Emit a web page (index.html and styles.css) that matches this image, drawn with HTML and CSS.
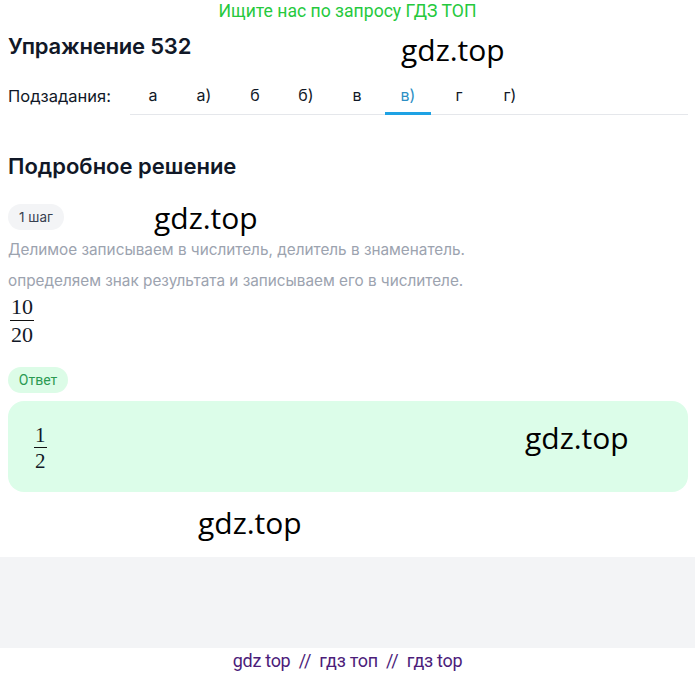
FILE: index.html
```html
<!DOCTYPE html>
<html lang="ru">

<head>
    <meta charset="UTF-8" />
    <meta name="viewport" content="width=device-width, initial-scale=1.0" />
    <title>Упражнение 532</title>
    <link rel="stylesheet" href="styles.css">
</head>

<body>
    <div class="promo">Ищите нас по запросу ГДЗ ТОП</div>
    <main class="task">
        <div class="title-row">
            <h1>Упражнение 532</h1>
            <span class="mark mark-title">gdz.top</span>
        </div>
        <div class="subtasks">
            <span class="subtasks-label">Подзадания:</span>
            <nav class="tabs">
                <a href="#">а</a>
                <a href="#">а)</a>
                <a href="#">б</a>
                <a href="#">б)</a>
                <a href="#">в</a>
                <a href="#" class="active">в)</a>
                <a href="#">г</a>
                <a href="#">г)</a>
            </nav>
        </div>

        <h2>Подробное решение</h2>
        <div class="step-row">
            <span class="pill">1 шаг</span>
            <span class="mark mark-step">gdz.top</span>
        </div>
        <p class="note">Делимое записываем в числитель, делитель в знаменатель.</p>
        <p class="note">определяем знак результата и записываем его в числителе.</p>
        <div class="frac">
            <span class="num">10</span>
            <span class="den">20</span>
        </div>

        <span class="pill pill-answer">Ответ</span>
        <div class="answer">
            <div class="frac frac-small">
                <span class="num">1</span>
                <span class="den">2</span>
            </div>
            <span class="mark mark-answer">gdz.top</span>
        </div>
        <div class="mark-row">
            <span class="mark">gdz.top</span>
        </div>
    </main>
    <div class="grey-band"></div>
    <footer>gdz top&nbsp; //&nbsp; гдз топ&nbsp; //&nbsp; гдз top</footer>
</body>

</html>
```

FILE: styles.css
```css
* {
    padding: 0;
    margin: 0;
    box-sizing: border-box;
}

body {
    font-family: Inter, "Noto Sans", sans-serif;
    background-color: #fff;
    color: #111827;
}

.promo {
    font-family: Roboto, sans-serif;
    font-size: 17.6px;
    line-height: 22px;
    text-align: center;
    color: #25c93d;
}

.task {
    padding: 0 7px 0 8px;
}

.title-row {
    position: relative;
    padding-top: 11px;
}

h1 {
    font-size: 22px;
    line-height: 26px;
    font-weight: 600;
    letter-spacing: -0.2px;
}

.mark {
    font-family: "Open Sans", sans-serif;
    font-size: 30px;
    line-height: 34px;
    color: #000;
}

.mark-title {
    position: absolute;
    left: 393px;
    top: 11px;
}

.subtasks {
    display: flex;
    align-items: flex-end;
    margin-top: 19px;
}

.subtasks-label {
    width: 122px;
    font-size: 16.5px;
    line-height: 20px;
    padding-bottom: 9px;
}

.tabs {
    display: flex;
    gap: 5px;
    flex: 1;
    border-bottom: 1px solid #e5e7eb;
}

.tabs a {
    width: 46px;
    height: 36px;
    line-height: 34px;
    text-align: center;
    font-size: 16px;
    color: #111827;
    text-decoration: none;
}

.tabs a.active {
    color: #2d8fc4;
    border-bottom: 3px solid #1ea2e4;
    margin-bottom: -1px;
    height: 37px;
}

h2 {
    margin-top: 38px;
    font-size: 22px;
    line-height: 26px;
    font-weight: 600;
}

.step-row {
    position: relative;
    margin-top: 25px;
}

.pill {
    display: inline-block;
    height: 26px;
    line-height: 26px;
    padding: 0 11px;
    border-radius: 13px;
    background-color: #f3f4f6;
    font-size: 13.5px;
    color: #374151;
}

.mark-step {
    position: absolute;
    left: 146px;
    top: -3px;
}

.note {
    font-size: 15.3px;
    line-height: 20px;
    color: #9ca3af;
    margin-top: 10px;
}

.note + .note {
    margin-top: 11px;
}

.frac {
    display: inline-flex;
    flex-direction: column;
    align-items: center;
    margin: 5px 0 0 2px;
    font-family: "Liberation Serif", serif;
    font-size: 22px;
    line-height: 22px;
}

.num {
    padding: 0 1px 2px;
    border-bottom: 1px solid #111;
}

.den {
    padding-top: 3px;
}

.pill-answer {
    display: block;
    width: 60px;
    margin-top: 21px;
    text-align: center;
    padding: 0;
    background-color: #dcfce7;
    color: #2a9a52;
    font-family: Roboto, sans-serif;
    font-size: 14px;
}

.answer {
    position: relative;
    margin-top: 8px;
    height: 91px;
    padding: 24px 0 0 26px;
    border-radius: 16px;
    background-color: #dcfde9;
}

.frac-small {
    margin: 0;
    font-size: 21px;
    line-height: 20px;
}

.mark-answer {
    position: absolute;
    left: 517px;
    top: 20px;
}

.mark-row {
    height: 65px;
    padding: 14px 0 0 190px;
}

.grey-band {
    height: 91px;
    background-color: #f3f4f6;
}

footer {
    font-family: Roboto, sans-serif;
    font-size: 18px;
    line-height: 26px;
    text-align: center;
    color: #4c1d7a;
    letter-spacing: -0.3px;
}
```
